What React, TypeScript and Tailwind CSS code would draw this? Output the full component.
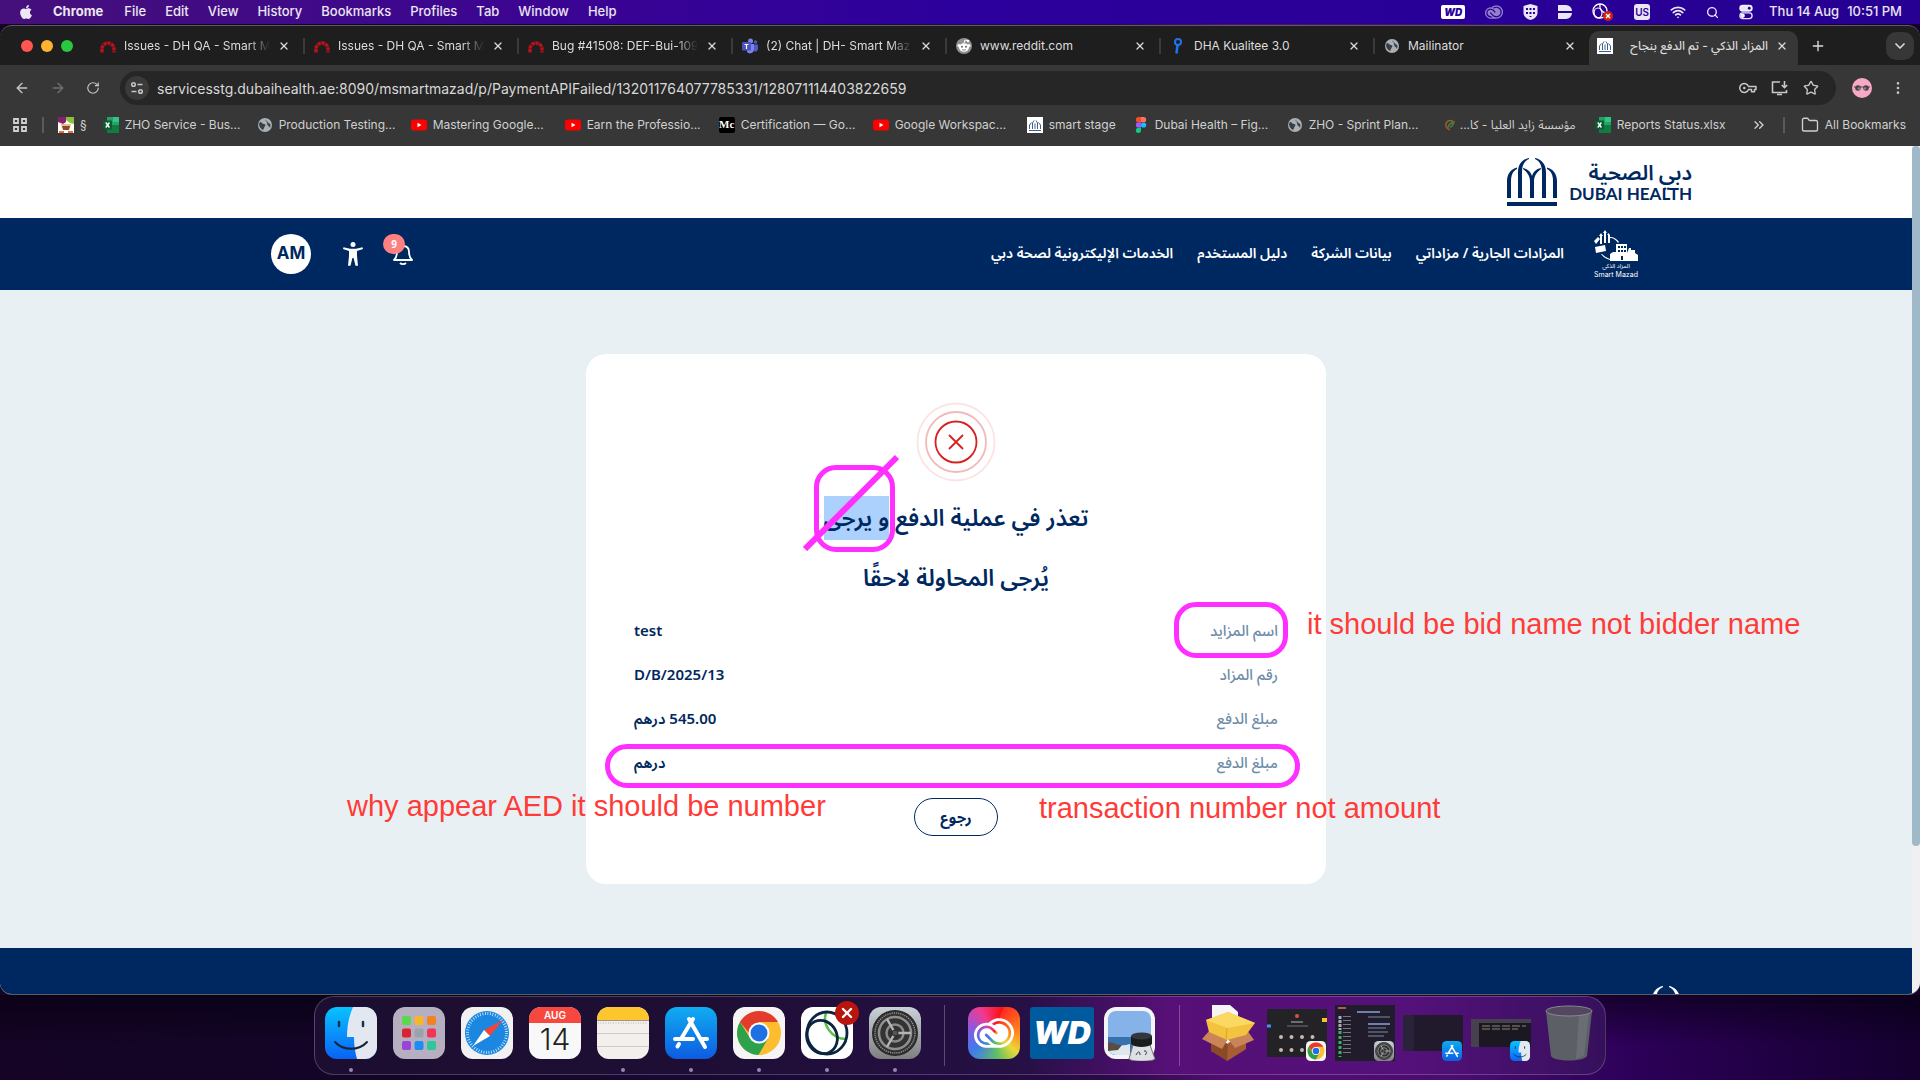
import { ReactNode } from "react";
import {
  ArrowLeft,
  ArrowRight,
  ChevronDown,
  ChevronsRight,
  EllipsisVertical,
  Folder,
  Plus,
  RotateCw,
  Search,
  Star,
  Wifi,
  X,
} from "lucide-react";
import { FaApple } from "react-icons/fa";
import { SiAdobecreativecloud } from "react-icons/si";
import clsx from "clsx";

const MENUS = ["File", "Edit", "View", "History", "Bookmarks", "Profiles", "Tab", "Window", "Help"];

type Tab = { title: string; icon: ReactNode; fade?: boolean };

const TABS: Tab[] = [
  { title: "Issues - DH QA - Smart M", icon: <RedmineIcon />, fade: true },
  { title: "Issues - DH QA - Smart M", icon: <RedmineIcon />, fade: true },
  { title: "Bug #41508: DEF-Bui-109", icon: <RedmineIcon />, fade: true },
  { title: "(2) Chat | DH- Smart Maz", icon: <TeamsIcon />, fade: true },
  { title: "www.reddit.com", icon: <RedditIcon /> },
  { title: "DHA Kualitee 3.0", icon: <KualiteeIcon /> },
  { title: "Mailinator", icon: <GlobeIcon /> },
];

type Bookmark = { title: string; icon: ReactNode; rtl?: boolean; short?: boolean };

const BOOKMARKS: Bookmark[] = [
  { title: "ZHO Service - Bus...", icon: <ExcelIcon /> },
  { title: "Production Testing...", icon: <GlobeIcon /> },
  { title: "Mastering Google...", icon: <YoutubeIcon /> },
  { title: "Earn the Professio...", icon: <YoutubeIcon /> },
  { title: "Certification — Go...", icon: <MediumIcon /> },
  { title: "Google Workspac...", icon: <YoutubeIcon /> },
  { title: "smart stage", icon: <DubaiFavicon />, short: true },
  { title: "Dubai Health – Fig...", icon: <FigmaIcon /> },
  { title: "ZHO - Sprint Plan...", icon: <GlobeIcon /> },
  { title: "مؤسسة زايد العليا - كا...", icon: <ZayedIcon />, rtl: true },
  { title: "Reports Status.xlsx", icon: <ExcelIcon /> },
];

const NAV_LINKS = [
  "المزادات الجارية / مزاداتي",
  "بيانات الشركة",
  "دليل المستخدم",
  "الخدمات الإليكترونية لصحة دبي",
];

const DETAILS = [
  { label: "اسم المزايد", value: "test" },
  { label: "رقم المزاد", value: "D/B/2025/13" },
  { label: "مبلغ الدفع", value: "545.00 درهم" },
  { label: "مبلغ الدفع", value: "درهم" },
];

export default function App() {
  return (
    <div className="flex h-screen min-h-[1080px] w-full flex-col overflow-hidden bg-[linear-gradient(90deg,#150425_0%,#130528_20%,#1b0a3c_45%,#2a0a48_58%,#520d72_64%,#4a0c70_76%,#2c0058_85%,#14002e_100%)] font-[Inter,'Noto_Sans_Arabic','Noto_Sans',sans-serif]">
      <MenuBar />
      <div className="mt-px flex min-h-0 flex-1 flex-col overflow-hidden rounded-xl border-y border-[#5c5c60] bg-[#1e1e1e]">
        <TabStrip />
        <Toolbar />
        <BookmarksBar />
        <div className="flex min-h-0 flex-1">
          <Page />
          <div className="w-2 bg-[#f0f0f0]">
            <div className="h-[700px] rounded-full bg-[#9fb9c9]" />
          </div>
        </div>
      </div>
      <Dock />
    </div>
  );
}

/* ---------- macOS menu bar ---------- */

function MenuBar() {
  return (
    <header className="flex h-6 shrink-0 items-center justify-between bg-[linear-gradient(90deg,#45107a_0%,#3a0494_30%,#2c009c_50%,#260092_100%)] pr-[18px] pl-[18px] text-[13px] text-white/90">
      <nav className="flex items-center gap-[19px]">
        <button aria-label="Apple menu">
          <FaApple className="size-4" />
        </button>
        <button className="mr-0.5 font-bold">Chrome</button>
        {MENUS.map((menu) => (
          <button key={menu} className="font-medium">
            {menu}
          </button>
        ))}
      </nav>
      <div className="flex items-center gap-5">
        <span className="rounded-[2px] bg-white px-[3px] text-[10px] leading-[14px] font-black text-[#2c009c] italic">WD</span>
        <SiAdobecreativecloud className="size-[18px] text-white/50" />
        <ShieldGrid />
        <svg className="h-4 w-3.5" viewBox="1 0 14 16" fill="currentColor">
          <path d="M1 1h8a6 6 0 0 1 6 6H1zM1 9h14a6 6 0 0 1-6 6H1z" />
        </svg>
        <svg className="h-5 w-[22px]" viewBox="0 0 22 20" fill="none" stroke="white">
          <circle cx="8" cy="9" r="7" strokeWidth="1.4" />
          <ellipse cx="6" cy="11" rx="4" ry="5" strokeWidth="1.2" />
          <path d="M8 2c-1 6 3 9 7 9" strokeWidth="1.2" />
          <circle cx="16" cy="14" r="5" fill="#d0210f" stroke="none" />
          <path d="m14 12 4 4m0-4-4 4" strokeWidth="1.4" />
        </svg>
        <span className="rounded-[3px] bg-white/90 px-px text-[10px] leading-4 font-semibold text-[#2c009c]">US</span>
        <Wifi className="size-4" strokeWidth={2.6} />
        <Search className="size-[13px]" strokeWidth={2.5} />
        <svg className="h-4 w-3.5" viewBox="0 0 15 16" fill="none" stroke="currentColor" strokeWidth="1.4">
          <rect x="1" y="9" width="13" height="6" rx="3" />
          <circle cx="4" cy="12" r="1.6" fill="currentColor" />
          <rect x="1" y="1" width="13" height="6" rx="3" fill="currentColor" />
          <circle cx="11" cy="4" r="1.5" fill="#2c009c" stroke="none" />
        </svg>
        <time className="-ml-1 flex gap-2 font-medium">
          <span>Thu 14 Aug</span>
          <span>10:51 PM</span>
        </time>
      </div>
    </header>
  );
}

function ShieldGrid() {
  return (
    <svg className="h-4 w-[15px]" viewBox="0 0 15 16" fill="currentColor">
      <path d="M0.5 2 7.5 0l7 2v7c0 3-3 6-7 7-4-1-7-4-7-7z" />
      <path d="M3 4h2v2H3zM6.500 4h2v2h-2zM10 4h2v2h-2zM3 8h2v2H3zM6.500 8h2v2h-2zM10 8h2v2h-2zM6.500 12h2v1h-2z" fill="#2c009c" />
    </svg>
  );
}

/* ---------- Chrome window ---------- */

function TabStrip() {
  return (
    <div className="flex h-[39px] shrink-0 items-center pr-1.5 pl-[21px] text-[12px] text-[#dcdcdc]">
      <div className="mr-4 flex w-[54px] gap-2">
        <button aria-label="Close window" className="size-3 rounded-full bg-[#ff5650]" />
        <button aria-label="Minimise" className="size-3 rounded-full bg-[#fdb32f]" />
        <button aria-label="Zoom" className="size-3 rounded-full bg-[#28c840]" />
      </div>
      {TABS.map((tab, i) => (
        <div
          key={i}
          className={clsx(
            "flex h-4 w-[214px] min-w-0 items-center gap-2 pr-[13px] pl-[9px]",
            i < TABS.length - 1 && "border-r-2 border-[#3a3a3a]"
          )}
        >
          {tab.icon}
          <button
            className={clsx(
              "flex-1 overflow-hidden text-left whitespace-nowrap",
              tab.fade && "mask-r-from-85%"
            )}
          >
            {tab.title}
          </button>
          <button aria-label="Close tab">
            <X className="size-3" strokeWidth={2.5} />
          </button>
        </div>
      ))}
      <div className="flex h-[34px] w-[209px] items-center gap-2 self-end rounded-t-[10px] bg-[#373737] px-2 pb-1">
        <DubaiFavicon />
        <button className="flex-1 overflow-hidden text-right font-medium whitespace-nowrap" dir="rtl">
          المزاد الذكي - تم الدفع بنجاح
        </button>
        <button aria-label="Close tab" className="mr-0.5">
          <X className="size-3" strokeWidth={2.5} />
        </button>
      </div>
      <button aria-label="New tab" className="ml-3">
        <Plus className="size-4" />
      </button>
      <button aria-label="Search tabs" className="ml-auto flex size-7 items-center justify-center rounded-[10px] bg-[#373737]">
        <ChevronDown className="size-4" strokeWidth={2.5} />
      </button>
    </div>
  );
}

function Toolbar() {
  return (
    <div className="flex h-[46px] shrink-0 items-center bg-[#373737] px-3.5 text-[#c7c7c7]">
      <button aria-label="Back">
        <ArrowLeft className="size-4" />
      </button>
      <button aria-label="Forward" className="ml-5 text-[#707070]">
        <ArrowRight className="size-4" />
      </button>
      <button aria-label="Reload" className="ml-5">
        <RotateCw className="size-3.5" />
      </button>
      <div className="ml-5 flex h-[34px] flex-1 items-center rounded-full bg-[#262626] pr-[17px] pl-[5px]">
        <button aria-label="Site information" className="flex size-6 items-center justify-center rounded-full bg-[#3a3a3a]">
          <svg className="size-3.5" viewBox="0 0 14 14" fill="none" stroke="currentColor" strokeWidth="1.5">
            <circle cx="3.500" cy="3.500" r="1.800" />
            <path d="M7.500 3.500h5M1.500 10.500h5" />
            <circle cx="10.500" cy="10.500" r="1.800" />
          </svg>
        </button>
        <input
          aria-label="Address"
          className="ml-2 flex-1 bg-transparent text-[14px] text-[#d8d8d8] outline-none"
          defaultValue="servicesstg.dubaihealth.ae:8090/msmartmazad/p/PaymentAPIFailed/132011764077785331/128071114403822659"
        />
        <div className="flex items-center gap-3.5">
          <button aria-label="Passwords">
            <KeyIcon />
          </button>
          <button aria-label="Install app">
            <InstallIcon />
          </button>
          <button aria-label="Bookmark this page">
            <Star className="size-4" />
          </button>
        </div>
      </div>
      <button aria-label="Profile" className="ml-4">
        <svg className="size-5" viewBox="0 0 20 20">
          <circle cx="10" cy="10" r="10" fill="#f7a8c4" />
          <path d="M2 8.500h16v1H2z" fill="#5b4a52" />
          <circle cx="6" cy="10" r="2.800" fill="#4a4246" />
          <circle cx="14" cy="10" r="2.800" fill="#4a4246" />
          <circle cx="7" cy="10.500" r="1.200" fill="#8d8388" />
          <circle cx="13" cy="10.500" r="1.200" fill="#8d8388" />
        </svg>
      </button>
      <button aria-label="Menu" className="ml-[18px]">
        <EllipsisVertical className="size-4" />
      </button>
    </div>
  );
}

function KeyIcon() {
  return (
    <svg className="h-4 w-[18px]" viewBox="0 0 18 16" fill="none" stroke="currentColor" strokeWidth="1.5">
      <path d="M9.500 6.500H17v3h-1.500v2.200h-3V9.500h-3a4.500 4.500 0 1 1 0-3z" strokeLinejoin="round" />
      <circle cx="5.300" cy="8" r="1.300" fill="currentColor" stroke="none" />
    </svg>
  );
}

function InstallIcon() {
  return (
    <svg className="h-4 w-[18px]" viewBox="0 0 18 16" fill="none" stroke="currentColor" strokeWidth="1.600">
      <path d="M9 2H1.500v10.500h14V10M6 14.500h5" />
      <path d="M13.500 1v6.500M10.800 5l2.700 2.700L16.200 5" />
    </svg>
  );
}

function BookmarksBar() {
  return (
    <nav className="flex h-[35px] shrink-0 items-center overflow-hidden bg-[#373737] pr-3.5 pb-2 pl-3 text-[12px] whitespace-nowrap text-[#d0d0d0]">
      <button aria-label="Apps">
        <svg className="size-4" viewBox="0 0 16 16" fill="none" stroke="currentColor" strokeWidth="1.8">
          <path d="M2 2h4v4H2zM10 2h4v4h-4zM2 10h4v4H2zM10 10h4v4h-4z" />
        </svg>
      </button>
      <span className="mr-3.5 ml-3.5 h-4 w-0.5 shrink-0 bg-[#5a5a5a]" />
      <a href="#" className="mr-4 flex items-center gap-1.5">
        <CupIcon />§
      </a>
      <div className="flex gap-[19px]">
        {BOOKMARKS.map((b) => (
          <a key={b.title} href="#" className="flex items-center gap-1.5">
            {b.icon}
            <span className={b.short ? "w-[67px]" : "w-[113px]"} dir={b.rtl ? "rtl" : "ltr"}>
              {b.title}
            </span>
          </a>
        ))}
      </div>
      <div className="ml-auto flex items-center">
        <button aria-label="More bookmarks">
          <ChevronsRight className="size-4" />
        </button>
        <span className="mx-4 h-4 w-0.5 bg-[#5a5a5a]" />
        <a href="#" className="flex items-center gap-1.5">
          <Folder className="size-[18px]" strokeWidth={1.8} />
          All Bookmarks
        </a>
      </div>
    </nav>
  );
}

/* ---------- Web page ---------- */

function Page() {
  return (
    <div
      dir="rtl"
      className="flex flex-1 flex-col overflow-hidden bg-[#e8f0f3] font-['Noto_Sans','Noto_Sans_Arabic',sans-serif] text-[#002860]"
    >
      <div className="flex h-[72px] shrink-0 items-center bg-white px-[220px]">
        <a href="#" aria-label="Dubai Health" className="flex items-center gap-3" dir="ltr">
          <DubaiArches />
          <span className="flex flex-col items-end font-[Lato,'Noto_Sans_Arabic',sans-serif]">
            <span className="text-[21px] leading-5 font-semibold" dir="rtl">دبي الصحية</span>
            <span className="pt-1 text-[17px] leading-4 font-bold">DUBAI HEALTH</span>
          </span>
        </a>
      </div>
      <header className="flex h-[72px] shrink-0 items-center bg-[#002860] pr-[274px] pl-[271px] text-white">
        <a href="#" className="ml-[30px] flex flex-col items-center">
          <MazadIcon />
          <span className="text-[6px] leading-[9px]">المزاد الذكي</span>
          <span className="font-[Inter] text-[7px] leading-[7px]">Smart Mazad</span>
        </a>
        <nav className="flex gap-6 pb-1 text-[14px] font-semibold">
          {NAV_LINKS.map((link) => (
            <a key={link} href="#">
              {link}
            </a>
          ))}
        </nav>
        <div className="mr-auto flex items-center">
          <button aria-label="Notifications" className="relative">
            <svg className="size-6" viewBox="0 0 24 24" fill="none" stroke="currentColor" strokeWidth="1.8">
              <path d="M3 18c2-2 3-4 3-8 0-4 2.500-6 6-6s6 2 6 6c0 4 1 6 3 8z" strokeLinejoin="round" />
              <path d="M9 21c1.500 1.500 4.500 1.500 6 0" />
            </svg>
            <span className="absolute -top-2 -left-2 flex h-5 w-[22px] items-center justify-center rounded-full bg-[#ff8080] text-[10px] font-bold">
              9
            </span>
          </button>
          <button aria-label="Accessibility" className="mr-7">
            <svg className="h-6 w-5" viewBox="0 0 20 24" fill="currentColor">
              <circle cx="10" cy="2.500" r="2.500" />
              <path d="M.5 5.300 7 6.800h6l6.500-1.500.5 1.700-6 2v5l1 9.700h-2.500L10.600 16H9.400l-1.900 7.700H5L6 14V9L0 7z" />
            </svg>
          </button>
          <button className="mr-8 size-10 rounded-full bg-white font-[Inter] text-[17px] font-bold text-[#002860]">AM</button>
        </div>
      </header>

      <main className="flex shrink-0 justify-center py-16">
        <PaymentCard />
      </main>

      <footer className="flex-1 overflow-hidden bg-[#002860] px-[221px] pt-[38px] text-white">
        <DubaiArches />
      </footer>
    </div>
  );
}

function PaymentCard() {
  return (
    <section className="relative w-[740px] rounded-[20px] bg-white px-12 py-12">
      <svg className="mx-auto size-20" viewBox="0 0 80 80" fill="none" stroke="#d92020">
        <circle cx="40" cy="40" r="38.500" stroke="#fbe4e4" strokeWidth="1.800" />
        <circle cx="40" cy="40" r="30" stroke="#f3b9b9" strokeWidth="1.800" />
        <circle cx="40" cy="40" r="20.500" strokeWidth="1.800" />
        <path d="m33.500 33.500 13 13m0-13-13 13" strokeWidth="1.800" strokeLinecap="round" />
      </svg>
      <h1 className="pt-3.5 text-center text-[23px] leading-[42px] font-semibold">
        تعذر في عملية الدفع <mark className="inline-block bg-[#abd1fc] pb-0.5 text-inherit">و يرجى</mark>
      </h1>
      <h2 className="pt-4 text-center text-[23px] leading-[42px] font-semibold">يُرجى المحاولة لاحقًا</h2>
      <table className="mt-2.5 w-full text-[15px]">
        <tbody>
          {DETAILS.map((row, i) => (
            <tr key={i} className="h-11">
              <th scope="row" className="p-0 text-start font-medium text-[#6d8ba8]">
                {row.label}
              </th>
              <td className="p-0 text-end font-semibold">{row.value}</td>
            </tr>
          ))}
        </tbody>
      </table>
      <button className="mx-auto mt-3.5 block h-[38px] w-[84px] rounded-full border border-[#002860] text-[15px] font-bold">
        رجوع
      </button>
      <Annotations />
    </section>
  );
}

// Review marks drawn over the card
function Annotations() {
  return (
    <div dir="ltr" className="pointer-events-none absolute inset-0 font-['Liberation_Sans',Arial,sans-serif] text-[29px] leading-8 whitespace-nowrap text-[#ff3b38]">
      <div className="absolute top-[111px] left-[228px] h-[87px] w-[81px] rounded-[22px] border-5 border-[#ff2fff]" />
      <svg className="absolute top-[100px] left-[217px] h-[97px] w-24" viewBox="0 0 96 97">
        <path d="M2 95 94 3" stroke="#ff2fff" strokeWidth="6" />
      </svg>
      <div className="absolute top-[248px] left-[588px] h-14 w-[114px] rounded-[22px] border-5 border-[#ff2fff]" />
      <div className="absolute top-[390px] left-[19px] h-11 w-[695px] rounded-[22px] border-5 border-[#ff2fff]" />
      <p className="absolute top-[254px] left-[721px]">it should be bid name not bidder name</p>
      <p className="absolute top-[436px] left-[-239px]">why appear AED it should be number</p>
      <p className="absolute top-[438px] left-[453px]">transaction number not amount</p>
    </div>
  );
}

function DubaiArches() {
  return (
    <svg className="h-12 w-[50px] shrink-0" viewBox="0 0 50 48" fill="currentColor">
      <path d="M0 40V23C0 16 4 11 10 9.500V11C6 13 4 17 4 23v17z" />
      <path d="M11 40V14C11 6 16 1 22 0v1c-5 2-7 7-7 13v26z" />
      <path d="M23 40V23c0-5-3-9-7-12v-1c5 1 8 4 9 8 1-4 4-7 9-8v1c-4 3-7 7-7 12v17z" />
      <path d="M39 40V14C39 6 34 1 28 0v1c5 2 7 7 7 13v26z" />
      <path d="M50 40V23C50 16 46 11 40 9.500V11c4 2 6 6 6 12v17z" />
      <path d="M0 44h50v4H0z" />
    </svg>
  );
}

function MazadIcon() {
  return (
    <svg className="h-8 w-11" viewBox="0 0 44 32" fill="currentColor">
      <path d="M6 14V6H5l2-3 2 3H8v8zM10 13V3H9l2-3 2 3h-1v10zM14 13V5h-1l1.500-2L16 5v8z" />
      <path d="m0 11 4-4 2 2-4 5zM1 17l10-2 1 6-10 2z" />
      <path d="M16 7c4 0 7 2 9 5l-1 1c-2-3-4-5-8-5zM7 24c2 3 5 5 9 6v-1c-3-1-6-3-8-5z" />
      <path
        fillRule="evenodd"
        d="M22 14h11v17H22zM24 16v2h2v-2zm3 0v2h2v-2zm3 0v2h2v-2zm-6 4v2h2v-2zm3 0v2h2v-2zm3 0v2h2v-2zm-3 6v4h2v-4z"
      />
      <path d="M16 31v-7l3-2h5l3 2v7zM33 31v-8l2-5h2v2h4v3l3 2v6z" />
    </svg>
  );
}

/* ---------- Small site icons ---------- */

function RedmineIcon() {
  return (
    <svg className="size-4 shrink-0" viewBox="0 0 16 16" fill="none" stroke="#b5121b" strokeWidth="3.500">
      <path d="M2 14.500V11a6 6 0 0 1 12 0v3.500" strokeDasharray="3.400 0.600" />
    </svg>
  );
}

function TeamsIcon() {
  return (
    <svg className="size-4 shrink-0" viewBox="0 0 16 16">
      <circle cx="8.500" cy="3" r="2.500" fill="#7b83eb" />
      <circle cx="13.500" cy="4" r="1.700" fill="#5059c9" />
      <path d="M5 6h7v5a4 4 0 0 1-7 3z" fill="#7b83eb" />
      <path d="M12 6.500h4V11a2.500 2.500 0 0 1-4 2z" fill="#5059c9" />
      <rect y="4" width="9" height="8.500" rx="1" fill="#4b53bc" />
      <path d="M2.500 6.500h4M4.500 6.500V11" stroke="white" strokeWidth="1.200" />
    </svg>
  );
}

function RedditIcon() {
  return (
    <svg className="size-4 shrink-0" viewBox="0 0 16 16">
      <circle cx="8" cy="8" r="8" fill="#8f8f8f" />
      <path d="m8 5 1-3 2 .500" stroke="white" fill="none" />
      <circle cx="12" cy="3" r="1.200" fill="white" />
      <circle cx="3" cy="7.500" r="1.500" fill="white" />
      <circle cx="13" cy="7.500" r="1.500" fill="white" />
      <ellipse cx="8" cy="9.500" rx="5" ry="4.200" fill="white" />
      <circle cx="6" cy="8.800" r="1" fill="#666" />
      <circle cx="10" cy="8.800" r="1" fill="#666" />
      <path d="M6 11.500c1 .800 3 .800 4 0" stroke="#666" fill="none" strokeWidth=".800" />
    </svg>
  );
}

function KualiteeIcon() {
  return (
    <svg className="size-4 shrink-0" viewBox="0 0 16 16" fill="none" stroke="#1f74e8" strokeWidth="2">
      <circle cx="8" cy="4" r="3" />
      <path d="M7.500 7 6.500 15.500" strokeWidth="2.500" />
    </svg>
  );
}

function GlobeIcon() {
  return (
    <svg className="size-4 shrink-0" viewBox="0 0 16 16">
      <circle cx="8" cy="8" r="7" fill="#a9b0b6" />
      <path d="M3 5c2 0 2 2 4 2 1.500 0 2 1 1 2s-1 3-2 4c-2-1-4-3-4-6zM9 2.500c-1 1 0 2 1 2s1 2 2.500 2c1 0 1.500 3 0 4.500.500-2-1.500-1.500-2-3" fill="#3a3f44" />
    </svg>
  );
}

function ExcelIcon() {
  return (
    <svg className="size-4 shrink-0" viewBox="0 0 16 16">
      <path d="M4 0h12v16H4z" fill="#21a366" />
      <path d="M10 0h6v5h-6z" fill="#33c481" />
      <path d="M4 8h12v8H4z" fill="#107c41" />
      <rect y="3.500" width="9" height="9" rx="1" fill="#0b5c30" />
      <path d="m2.800 5.500 3.600 5m0-5-3.600 5" stroke="white" strokeWidth="1.400" />
    </svg>
  );
}

function YoutubeIcon() {
  return (
    <svg className="size-4 shrink-0" viewBox="0 0 16 16">
      <rect y="2.500" width="16" height="11" rx="3" fill="#ff0000" />
      <path d="m6.500 5.800 4 2.200-4 2.200z" fill="white" />
    </svg>
  );
}

function MediumIcon() {
  return (
    <span className="flex size-4 shrink-0 items-center justify-center rounded-[2px] bg-black font-['Liberation_Serif',serif] text-[11px] font-bold text-white">
      Mc
    </span>
  );
}

function DubaiFavicon() {
  return (
    <svg className="size-4 shrink-0" viewBox="0 0 16 16" fill="none" stroke="#3d5f8f">
      <path d="M0 0h16v16H0z" fill="white" stroke="none" />
      <path d="M2.500 12V8l2-2.500M5.500 12V6L7 3.500M8 12V6.500M10.500 12V6L9 3.500M13.500 12V8l-2-2.500M2 13.500h12" />
    </svg>
  );
}

function FigmaIcon() {
  return (
    <svg className="h-4 w-3.5 shrink-0" viewBox="2 0 14 16">
      <path d="M8 0H5.500a2.600 2.600 0 0 0 0 5.300H8z" fill="#f24e1e" />
      <path d="M8 0h2.500a2.600 2.600 0 0 1 0 5.300H8z" fill="#ff7262" />
      <path d="M8 5.300H5.500a2.600 2.600 0 0 0 0 5.300H8z" fill="#a259ff" />
      <circle cx="10.600" cy="8" r="2.600" fill="#1abcfe" />
      <path d="M8 10.700H5.500A2.600 2.600 0 1 0 8 13.300z" fill="#0acf83" />
    </svg>
  );
}

function ZayedIcon() {
  return (
    <svg className="size-4 shrink-0" viewBox="0 0 16 16" fill="none" strokeWidth="1.500">
      <path d="M12 4.500C8 2 4 5 5 9.500c1 2 2 3 4 3" stroke="#94602a" />
      <path d="M7 11c0-4 3-5 6-6-1 3-2 5-4 5" stroke="#4c7a3d" />
    </svg>
  );
}

function CupIcon() {
  return (
    <svg className="size-4 shrink-0" viewBox="0 0 16 16">
      <path d="M0 0h16v16H0z" fill="white" />
      <path d="M0 0h8v5L5 7 0 5z" fill="#8b1f6b" />
      <path d="M8 0h8v7l-4-1-4-3z" fill="#8bbf3f" />
      <path d="M3 7h10l-1 4H4z" fill="#e2bd8e" />
      <path d="M4 9h8l-1 4H5z" fill="#8c4a25" />
      <path d="M1 14h5v2H1zM10 14h5v2h-5z" fill="#e8702a" />
    </svg>
  );
}

/* ---------- Dock ---------- */

function Dock() {
  return (
    <div className="flex h-[85px] shrink-0 justify-center bg-[linear-gradient(180deg,rgba(5,0,15,0.6),transparent_60%)] pt-px">
      <div className="flex h-[79px] items-stretch rounded-[20px] border border-white/20 bg-[linear-gradient(90deg,#1c0e30_0%,#1e0e35_30%,#261045_55%,#561077_66%,#54117a_85%,#36105c_100%)] px-0.5">
        <DockItem running><FinderIcon /></DockItem>
        <DockItem><LaunchpadIcon /></DockItem>
        <DockItem><SafariIcon /></DockItem>
        <DockItem><CalendarIcon /></DockItem>
        <DockItem running><NotesIcon /></DockItem>
        <DockItem running><AppStoreIcon /></DockItem>
        <DockItem running><ChromeIcon /></DockItem>
        <DockItem running><OpenVpnIcon /></DockItem>
        <DockItem running><SettingsIcon /></DockItem>
        <DockDivider />
        <DockItem>
          <span className="flex size-[52px] items-center justify-center rounded-xl bg-[conic-gradient(from_20deg,#ff2a20,#ff9a20_80deg,#e8d83a_110deg,#62c162_150deg,#3f7bea_210deg,#8a5ae0_260deg,#f03a90_310deg,#ff1010)]">
            <SiAdobecreativecloud className="size-10 text-white" />
          </span>
        </DockItem>
        <DockItem>
          <span className="flex h-[52px] w-16 items-center justify-center rounded-[3px] bg-[#005a9e] font-[Inter] text-[32px] font-black text-white italic">
            WD
          </span>
        </DockItem>
        <DockItem><PreviewIcon /></DockItem>
        <DockDivider />
        <DockItem><BoxIcon /></DockItem>
        <DockItem>
          <MiniWindow badge={<ChromeIcon />} className="h-12 bg-[#222227]">
            <circle cx="30" cy="7" r="2" fill="#d9534a" />
            <path d="M24 13h12" stroke="#bbb" />
            <path d="M20 17h21" stroke="#777" />
            <path d="M14 28h34M14 41h24" stroke="#c9b8ae" strokeWidth="4" strokeLinecap="round" strokeDasharray="0 10.500" />
            <path d="M0 17h4" stroke="#4b8cf5" strokeWidth="3" />
            <path d="M55 11h5" stroke="#f4c430" strokeWidth="4" />
          </MiniWindow>
        </DockItem>
        <DockItem>
          <MiniWindow badge={<SettingsIcon />} className="h-14 bg-[#201c2c]">
            <path d="M3 3h8" stroke="#b55" strokeWidth="2" />
            <path d="M5 11v14" stroke="#aab" strokeWidth="3" strokeDasharray="3 1" />
            <path d="M5 26v26" stroke="#40b060" strokeWidth="3" strokeDasharray="3 2" />
            <path d="M12 11v40" stroke="#777" strokeWidth="8" strokeDasharray="1 3" />
            <path d="M22 7h23M33 19h22" stroke="#6f7fae" strokeWidth="2" />
            <path d="M33 12h22M33 23h18M33 27h20M33 31h16" stroke="#8088a0" />
          </MiniWindow>
        </DockItem>
        <DockItem>
          <MiniWindow badge={<AppStoreIcon />} className="h-9 bg-[#211a2d]">
            <path d="M0 0h11v36H0z" fill="#2a2238" />
          </MiniWindow>
        </DockItem>
        <DockItem>
          <MiniWindow badge={<FinderIcon />} className="h-7 bg-[#1c1822]">
            <path d="M0 0h60v4H8v24H0z" fill="#47414f" />
            <path d="M11 7h44M11 10h36" stroke="#8f8676" strokeDasharray="8 2" />
          </MiniWindow>
        </DockItem>
        <DockItem><TrashIcon /></DockItem>
      </div>
    </div>
  );
}

function DockItem({ children, running }: { children: ReactNode; running?: boolean }) {
  return (
    <button className="relative flex w-[68px] items-center justify-center pt-2 pb-3.5">
      {children}
      {running && <span className="absolute bottom-0.5 size-1 rounded-full bg-[#9c83b8]" />}
    </button>
  );
}

function DockDivider() {
  return <span className="mx-[15px] my-2 w-px bg-white/25" />;
}

type MiniWindowProps = { children: ReactNode; badge: ReactNode; className: string };

// Minimised window, with the app's badge in the corner of the dock cell
function MiniWindow({ children, badge, className }: MiniWindowProps) {
  return (
    <>
      <span className={clsx("w-[60px]", className)}>
        <svg className="h-full w-full" fill="none">
          {children}
        </svg>
      </span>
      <span className="absolute top-11 right-[5px] *:size-5">{badge}</span>
    </>
  );
}

function FinderIcon() {
  return (
    <svg className="size-[52px]" viewBox="0 0 52 52">
      <defs>
        <linearGradient id="finder" x2="0" y2="1">
          <stop stopColor="#08c3ff" />
          <stop offset="1" stopColor="#0a62f5" />
        </linearGradient>
        <clipPath id="finderClip">
          <rect width="52" height="52" rx="12" />
        </clipPath>
      </defs>
      <g clipPath="url(#finderClip)">
        <path d="M0 0h52v52H0z" fill="url(#finder)" />
        <path d="M28 0c-4 9-6 19-6 30h7c0 8 1 15 3 22h20V0z" fill="#e3e8f0" />
      </g>
      <path d="M14 15v4M38 15v4" stroke="#16324f" strokeWidth="2.500" strokeLinecap="round" />
      <path d="M10 35c8 9 24 9 32 0" fill="none" stroke="#16243a" strokeWidth="2" strokeLinecap="round" />
    </svg>
  );
}

const PADS = ["#5bd94c", "#f7b52c", "#f58220", "#d9232e", "#9aa3ab", "#f23557", "#9a45d8", "#1d8df5", "#2cc79a"];

function LaunchpadIcon() {
  return (
    <svg className="size-[52px]" viewBox="0 0 52 52">
      <rect width="52" height="52" rx="12" fill="#b5afc0" />
      {PADS.map((color, i) => (
        <rect key={color} x={9 + (i % 3) * 12.5} y={9 + Math.floor(i / 3) * 12.5} width="9" height="9" rx="2" fill={color} />
      ))}
    </svg>
  );
}

function SafariIcon() {
  return (
    <svg className="size-[52px]" viewBox="0 0 52 52">
      <rect width="52" height="52" rx="12" fill="#f1f1f1" />
      <circle cx="26" cy="26" r="22" fill="#1b87e0" />
      <circle cx="26" cy="26" r="19.500" fill="none" stroke="#d6ecff" strokeWidth="3" strokeDasharray="0.800 1.750" />
      <path d="m42 13-13 16-6-6z" fill="#f0453c" />
      <path d="m12 39 11-16 6 6z" fill="white" />
    </svg>
  );
}

function CalendarIcon() {
  return (
    <span className="flex size-[52px] flex-col overflow-hidden rounded-xl bg-[#f8f8f8] text-center">
      <span className="bg-[#f8473f] text-[10px] leading-4 font-semibold text-white">AUG</span>
      <span className="text-[30px] leading-8 font-light text-[#222]">14</span>
    </span>
  );
}

function NotesIcon() {
  return (
    <svg className="size-[52px]" viewBox="0 0 52 52">
      <rect width="52" height="52" rx="12" fill="#f2efec" />
      <path d="M0 13V12A12 12 0 0 1 12 0h28a12 12 0 0 1 12 12v1z" fill="#fec62e" />
      <path d="M0 13.500h52" stroke="#9b968c" />
      <path d="M1 16h50" stroke="#b8b3ab" strokeDasharray="1 1.500" />
      <path d="M0 26.500h52M0 39.500h52" stroke="#cfcac5" />
    </svg>
  );
}

function AppStoreIcon() {
  return (
    <svg className="size-[52px]" viewBox="0 0 52 52" fill="none" stroke="white" strokeWidth="4" strokeLinecap="round">
      <defs>
        <linearGradient id="store" x2="0" y2="1">
          <stop stopColor="#10acf2" />
          <stop offset="1" stopColor="#0d5ce0" />
        </linearGradient>
      </defs>
      <rect width="52" height="52" rx="12" fill="url(#store)" stroke="none" />
      <path d="m28 12-12 20M24 12l16 28M10 32h18M36 32h6M14 37l-1.500 2.500" />
    </svg>
  );
}

function ChromeIcon() {
  return (
    <svg className="size-[52px]" viewBox="0 0 52 52">
      <rect width="52" height="52" rx="12" fill="#f6f4f5" />
      <circle cx="26" cy="26" r="22" fill="#fdbd2e" />
      <path d="M26 15h19A22 22 0 0 0 7 15l10 12z" fill="#e33b2e" />
      <path d="M7 15a22 22 0 0 0 18.500 33L35 31.500 26 36a10 10 0 0 1-9-5z" fill="#2da14c" />
      <circle cx="26" cy="26" r="10.500" fill="white" />
      <circle cx="26" cy="26" r="8.500" fill="#1f6fe5" />
    </svg>
  );
}

function OpenVpnIcon() {
  return (
    <span className="relative">
      <svg className="size-[52px]" viewBox="0 0 52 52" fill="none" stroke="#0b2440" strokeWidth="2.800">
        <rect width="52" height="52" rx="12" fill="white" stroke="none" />
        <path d="M25 6c-4 12 6 26 20 26" stroke="#5cc04b" strokeWidth="2.500" />
        <ellipse cx="26" cy="26" rx="20" ry="21" />
        <ellipse cx="21" cy="30" rx="15" ry="17" transform="rotate(-25 21 30)" />
      </svg>
      <span className="absolute -top-1.5 -right-1.5 flex size-6 items-center justify-center rounded-full bg-[#b8150c] text-white">
        <X className="size-4" strokeWidth={3.5} />
      </span>
    </span>
  );
}

function SettingsIcon() {
  return (
    <svg className="size-[52px]" viewBox="0 0 52 52" fill="none" stroke="#2b2b2b">
      <defs>
        <linearGradient id="prefs" x2="0" y2="1">
          <stop stopColor="#c9d2d8" />
          <stop offset="1" stopColor="#7f7f7f" />
        </linearGradient>
      </defs>
      <rect width="52" height="52" rx="12" fill="url(#prefs)" stroke="none" />
      <circle cx="26" cy="26" r="22" fill="#333" strokeWidth="2" />
      <circle cx="26" cy="26" r="20" stroke="#8f8f8f" strokeWidth="1.500" strokeDasharray="1.200 1" />
      <circle cx="26" cy="26" r="16" stroke="#909090" strokeWidth="2.500" />
      <circle cx="26" cy="26" r="8.500" stroke="#8a8a8a" strokeWidth="2.500" />
      <path d="M26 26h16M26 26l-8-14M26 26l-8 14" stroke="#b4b4b4" strokeWidth="2.500" />
      <circle cx="26" cy="26" r="3" fill="#555" />
    </svg>
  );
}

function PreviewIcon() {
  return (
    <svg className="h-14 w-14" viewBox="0 0 56 56">
      <rect x="2" y="2" width="51" height="52" rx="12" fill="#f4f4f6" />
      <rect x="6" y="6" width="43" height="44" rx="8" fill="#86b2ea" />
      <path d="M6 32h43v10a8 8 0 0 1-8 8H14a8 8 0 0 1-8-8z" fill="#3671b0" />
      <path d="M6 42c6-4 14 0 22-3v11H14a8 8 0 0 1-8-8z" fill="#dfe7ee" />
      <path d="M6 38c4-3 8 3 14 2l-4 5-10 1z" fill="#5a4c42" />
      <path d="M31 40h17l5 14c-4 3-22 3-26 0z" fill="#dde1e5" stroke="#777" />
      <path d="M34 50c2-4 4-4 4 0m4-4c3-1 3 3 1 4" stroke="#333" fill="none" />
      <path d="M29 31v8c4 4 17 4 21 0v-8z" fill="#1a1c1e" />
      <ellipse cx="39.500" cy="31" rx="10.500" ry="3.500" fill="#34373a" />
    </svg>
  );
}

function BoxIcon() {
  return (
    <svg className="size-14 shrink-0" viewBox="0 0 56 56">
      <path d="M11 0h18l8 7v40H11z" fill="#f5f5f5" />
      <path d="m10 30 17 9 18-9v14L26 56 10 46z" fill="#8a4a26" />
      <path d="m27 38 18-8v14L26 56z" fill="#a65d33" />
      <path d="m9 25 18 9-6 10L1 34zM46 25 27 34l7 9 19-8z" fill="#c98458" />
      <path d="m5 15 22-8 27 11-9 12-19 5-18-8z" fill="#f3c23e" />
      <path d="m5 15 21 8 28-5-27-11z" fill="#fad861" />
      <path d="m26 23-1 11" stroke="#d9a42a" />
    </svg>
  );
}

function TrashIcon() {
  return (
    <svg className="h-14 w-12 shrink-0" viewBox="0 0 48 56">
      <path d="M1 6h46l-5 45c-3 6-33 6-36 0z" fill="#5c6066" />
      <path d="m34 10 10-2-5 43-8 3z" fill="#777c82" opacity=".500" />
      <ellipse cx="24" cy="6" rx="23" ry="5" fill="#54465f" stroke="#8a8a92" />
    </svg>
  );
}
